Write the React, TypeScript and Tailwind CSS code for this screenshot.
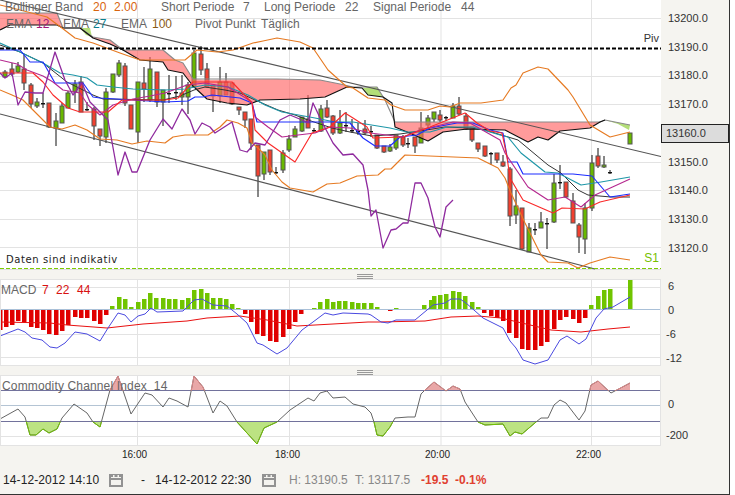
type Pt = [number, number];
type Candle = [number, number, number, number, number, "g" | "r" | "d"];

// x, high, low, body top, body bottom, colour (d = doji)
const candles: Candle[] = [
  [5, 70, 78, 72, 77, "g"], [12, 63, 76, 69, 74, "r"], [18, 62, 73, 66, 72, "g"], [24, 55, 90, 69, 83, "r"],
  [31, 83, 108, 85, 104, "r"], [37, 98, 108, 102, 106, "g"], [43, 93, 108, 103, 103, "d"], [49, 103, 128, 103, 127, "r"],
  [56, 113, 146, 121, 128, "g"], [62, 103, 123, 106, 123, "g"], [68, 91, 108, 93, 108, "g"], [75, 80, 103, 84, 92, "g"],
  [81, 76, 112, 82, 112, "r"], [87, 102, 111, 109, 109, "d"], [94, 107, 140, 109, 126, "r"], [100, 129, 146, 129, 136, "r"],
  [106, 88, 143, 92, 137, "g"], [113, 74, 93, 74, 92, "g"], [119, 60, 77, 63, 75, "g"], [125, 63, 106, 66, 103, "r"],
  [131, 105, 129, 105, 129, "r"], [138, 82, 143, 82, 132, "g"], [144, 67, 102, 83, 89, "r"], [150, 57, 102, 69, 100, "g"],
  [157, 72, 107, 72, 102, "r"], [163, 90, 126, 90, 102, "g"], [169, 75, 103, 93, 93, "d"], [176, 76, 100, 92, 92, "d"],
  [182, 75, 105, 93, 97, "g"], [188, 82, 114, 85, 97, "g"], [194, 50, 87, 53, 87, "g"], [201, 46, 75, 54, 70, "r"],
  [207, 63, 88, 69, 87, "r"], [213, 85, 112, 85, 96, "r"], [220, 67, 103, 82, 96, "g"], [226, 73, 95, 82, 95, "r"],
  [232, 83, 105, 83, 104, "r"], [239, 107, 115, 107, 110, "r"], [245, 112, 128, 112, 120, "r"], [251, 119, 150, 119, 143, "r"],
  [258, 145, 197, 145, 176, "r"], [264, 152, 180, 152, 174, "g"], [270, 150, 175, 150, 172, "r"], [276, 167, 174, 172, 172, "d"],
  [283, 150, 173, 153, 170, "g"], [289, 135, 152, 139, 150, "g"], [295, 126, 137, 129, 137, "g"], [302, 117, 132, 117, 131, "g"],
  [308, 95, 128, 119, 128, "r"], [314, 128, 132, 130, 130, "d"], [321, 105, 132, 109, 131, "g"], [327, 100, 118, 108, 117, "r"],
  [333, 115, 135, 116, 133, "r"], [340, 110, 134, 123, 133, "g"], [346, 112, 132, 125, 125, "d"], [352, 119, 133, 130, 130, "d"],
  [358, 123, 135, 131, 131, "d"], [365, 120, 135, 129, 133, "r"], [371, 126, 137, 131, 131, "d"], [377, 135, 149, 135, 148, "r"],
  [384, 146, 153, 146, 152, "r"], [390, 144, 152, 147, 151, "g"], [396, 135, 150, 135, 148, "g"], [403, 135, 147, 137, 145, "r"],
  [408, 138, 148, 143, 143, "d"], [415, 137, 153, 137, 146, "r"], [421, 112, 143, 128, 143, "g"], [428, 115, 130, 118, 125, "g"],
  [434, 112, 122, 112, 119, "g"], [440, 110, 122, 115, 120, "r"], [446, 116, 121, 117, 117, "d"], [453, 103, 118, 106, 118, "g"],
  [459, 97, 115, 106, 114, "r"], [466, 113, 130, 116, 129, "r"], [472, 127, 142, 127, 140, "r"], [478, 143, 152, 143, 149, "r"],
  [485, 146, 157, 146, 156, "r"], [491, 152, 165, 153, 153, "d"], [497, 153, 163, 153, 160, "r"], [503, 155, 167, 162, 166, "r"],
  [510, 167, 226, 169, 216, "r"], [516, 190, 224, 206, 215, "g"], [522, 208, 250, 208, 249, "r"], [529, 223, 252, 228, 252, "g"],
  [535, 223, 235, 229, 229, "d"], [541, 212, 228, 222, 228, "g"], [547, 218, 249, 223, 223, "d"], [554, 174, 223, 183, 222, "g"],
  [560, 165, 189, 182, 182, "d"], [566, 182, 198, 182, 197, "r"], [573, 193, 223, 201, 223, "r"], [579, 223, 253, 225, 237, "r"],
  [585, 203, 254, 208, 239, "g"], [592, 155, 211, 163, 208, "g"], [598, 148, 168, 156, 166, "r"], [604, 156, 168, 165, 167, "g"],
  [610, 170, 174, 172, 172, "d"], [630, 133, 144, 133, 144, "g"],
];

const upperBand: Pt[] = [[0, 5], [20, 10], [47, 17], [62, 28], [75, 38], [93, 43], [120, 53], [140, 60], [163, 60], [185, 60], [197, 50], [217, 52], [233, 50], [253, 43], [263, 41], [277, 38], [300, 42], [313, 48], [328, 70], [347, 87], [353, 88], [368, 98], [385, 100], [391, 105], [405, 110], [428, 110], [440, 106], [450, 107], [460, 103], [481, 103], [503, 100], [511, 88], [516, 85], [523, 73], [538, 67], [548, 69], [568, 90], [573, 97], [590, 125], [610, 137], [630, 132]];
const lowerBand: Pt[] = [[0, 90], [12, 95], [23, 100], [33, 110], [43, 120], [50, 127], [62, 129], [75, 125], [87, 130], [100, 139], [117, 140], [132, 144], [147, 141], [165, 143], [173, 137], [185, 135], [208, 135], [220, 127], [227, 120], [238, 123], [247, 128], [252, 143], [258, 148], [265, 155], [272, 170], [282, 182], [290, 188], [313, 192], [327, 184], [340, 183], [357, 176], [378, 175], [385, 169], [391, 169], [405, 155], [478, 158], [498, 168], [505, 178], [511, 193], [525, 223], [541, 255], [548, 262], [568, 263], [578, 268], [590, 263], [610, 257], [630, 260]];
const blackLine: Pt[] = [[0, 45], [20, 52], [43, 63], [67, 82], [93, 95], [103, 99], [163, 100], [180, 96], [194, 90], [205, 87], [225, 90], [240, 93], [255, 100], [278, 110], [295, 115], [308, 120], [332, 128], [350, 132], [372, 136], [400, 134], [420, 131], [445, 127], [470, 128], [485, 130], [518, 140], [548, 165], [561, 173], [578, 190], [588, 195], [611, 197], [630, 197]];
const tealLine: Pt[] = [[0, 43], [20, 52], [43, 63], [60, 73], [73, 75], [87, 78], [97, 85], [113, 87], [133, 89], [165, 90], [185, 89], [205, 85], [228, 87], [248, 95], [265, 105], [282, 112], [315, 118], [335, 122], [353, 122], [390, 128], [407, 132], [430, 132], [447, 127], [473, 127], [500, 135], [508, 137], [521, 153], [545, 172], [558, 173], [581, 185], [601, 182], [630, 177]];
const magentaLine: Pt[] = [[0, 60], [17, 64], [27, 70], [43, 76], [53, 82], [63, 90], [80, 93], [88, 105], [100, 115], [113, 105], [133, 99], [150, 96], [165, 93], [187, 85], [205, 83], [228, 87], [252, 102], [255, 117], [268, 127], [282, 137], [298, 135], [315, 133], [330, 127], [350, 128], [370, 133], [403, 137], [420, 130], [453, 122], [470, 123], [500, 140], [505, 153], [528, 187], [548, 200], [565, 197], [581, 207], [595, 195], [630, 179]];
const redLine: Pt[] = [[0, 73], [33, 73], [43, 82], [53, 95], [68, 108], [80, 112], [108, 112], [122, 100], [165, 100], [178, 98], [190, 85], [193, 82], [232, 82], [252, 103], [255, 130], [268, 143], [295, 162], [312, 133], [330, 127], [345, 113], [353, 118], [367, 127], [373, 138], [403, 137], [430, 127], [465, 113], [477, 123], [490, 131], [502, 133], [507, 157], [510, 178], [523, 200], [553, 213], [562, 208], [585, 209], [600, 202], [630, 195]];
const blueLine: Pt[] = [[0, 50], [20, 50], [30, 62], [43, 62], [55, 83], [83, 83], [93, 97], [100, 98], [165, 102], [188, 101], [195, 97], [203, 97], [212, 95], [240, 98], [252, 103], [257, 122], [335, 122], [350, 123], [363, 138], [375, 146], [390, 146], [400, 137], [417, 135], [430, 128], [457, 123], [473, 123], [490, 130], [503, 133], [508, 162], [517, 162], [523, 174], [573, 174], [592, 176], [610, 197], [630, 194]];
const purpleLine: Pt[] = [[0, 73], [5, 78], [12, 73], [18, 105], [25, 92], [35, 93], [43, 93], [55, 52], [65, 80], [73, 95], [82, 83], [90, 102], [108, 120], [118, 175], [125, 152], [132, 172], [137, 172], [150, 140], [163, 119], [172, 129], [182, 109], [190, 120], [195, 134], [202, 123], [210, 127], [215, 133], [232, 122], [240, 150], [247, 152], [255, 143], [265, 145], [280, 120], [290, 115], [302, 120], [308, 123], [313, 103], [322, 122], [333, 143], [343, 155], [353, 154], [363, 165], [368, 190], [371, 216], [376, 210], [383, 248], [391, 230], [396, 229], [403, 223], [408, 223], [415, 183], [421, 183], [428, 198], [435, 227], [440, 237], [446, 207], [453, 200]];

const cloudRed: Pt[][] = [
  [[0, 13], [57, 13], [63, 28], [57, 25], [10, 25], [0, 30]],
  [[93, 37], [110, 40], [123, 50], [163, 50], [175, 60], [183, 63], [193, 79], [207, 80], [277, 79], [320, 80], [340, 84], [353, 87], [347, 87], [325, 97], [300, 99], [260, 100], [247, 105], [227, 103], [207, 99], [193, 86], [183, 73], [168, 70], [163, 62], [140, 60], [123, 50], [110, 44], [93, 38]],
  [[395, 122], [600, 122], [590, 128], [560, 131], [548, 140], [538, 137], [528, 142], [505, 130], [467, 129], [443, 132], [428, 141], [407, 132], [395, 127]],
];
const cloudGreen: Pt[][] = [
  [[80, 28], [90, 28], [92, 37], [86, 35]],
  [[362, 88], [377, 87], [383, 97], [368, 95]],
  [[605, 120], [630, 125], [629, 130], [618, 124]],
];
const cloudTop: Pt[] = [[0, 13], [57, 13], [63, 28], [80, 28], [93, 37], [110, 40], [123, 50], [163, 50], [175, 60], [183, 63], [193, 79], [277, 79], [320, 80], [340, 84], [353, 87], [377, 87], [385, 100], [395, 122], [600, 122], [605, 120], [630, 125]];
const cloudBottom: Pt[] = [[0, 30], [10, 25], [57, 25], [63, 28], [80, 28], [93, 38], [110, 44], [123, 50], [140, 60], [163, 62], [168, 70], [183, 73], [193, 86], [207, 99], [227, 103], [247, 105], [260, 100], [300, 99], [325, 97], [347, 87], [362, 88], [368, 95], [383, 97], [392, 103], [395, 127], [407, 132], [428, 141], [443, 132], [467, 129], [505, 130], [528, 142], [538, 137], [548, 140], [560, 131], [590, 128], [600, 122], [605, 120]];

// x, bar end (zero line is 309)
const macdBars: Pt[] = [[0, 330], [6, 327], [12, 325], [18, 321], [24, 322], [31, 327], [37, 328], [43, 330], [49, 334], [56, 335], [62, 331], [68, 325], [75, 317], [81, 318], [87, 318], [94, 321], [100, 324], [106, 315], [112, 306], [119, 297], [125, 299], [131, 307], [138, 302], [144, 299], [150, 293], [156, 298], [163, 298], [169, 299], [175, 299], [182, 300], [188, 298], [194, 290], [201, 289], [207, 293], [213, 298], [220, 298], [226, 299], [232, 304], [238, 308], [245, 314], [251, 322], [257, 334], [263, 336], [270, 341], [276, 342], [283, 337], [289, 329], [295, 322], [301, 314], [314, 308], [320, 302], [327, 299], [333, 302], [339, 301], [345, 301], [352, 302], [358, 303], [364, 303], [371, 303], [377, 307], [390, 311], [396, 308], [424, 305], [431, 300], [434, 296], [440, 295], [446, 294], [453, 291], [459, 292], [465, 296], [472, 302], [478, 307], [484, 313], [491, 316], [497, 318], [503, 321], [509, 333], [516, 338], [522, 349], [528, 350], [535, 350], [541, 346], [547, 342], [554, 329], [560, 320], [566, 317], [573, 319], [579, 323], [585, 318], [591, 305], [598, 296], [604, 290], [610, 289], [630, 279]];
const macdBlue: Pt[] = [[0, 336], [18, 329], [25, 332], [32, 338], [42, 340], [50, 347], [57, 348], [65, 343], [75, 332], [87, 334], [100, 341], [108, 328], [118, 313], [125, 315], [131, 322], [138, 316], [145, 314], [151, 308], [157, 312], [183, 311], [194, 300], [202, 299], [213, 305], [227, 306], [237, 314], [247, 323], [257, 343], [263, 345], [277, 354], [287, 348], [302, 330], [313, 322], [325, 313], [333, 315], [343, 313], [368, 314], [371, 315], [381, 322], [388, 323], [396, 320], [415, 320], [433, 305], [445, 303], [451, 299], [460, 299], [466, 303], [483, 318], [503, 328], [510, 341], [516, 348], [523, 360], [535, 364], [548, 360], [560, 340], [567, 336], [579, 344], [586, 339], [596, 318], [604, 309], [613, 307], [630, 297]];
const macdRed: Pt[] = [[0, 322], [50, 323], [67, 325], [107, 328], [143, 324], [187, 321], [207, 318], [240, 316], [267, 320], [297, 326], [333, 324], [368, 322], [378, 322], [425, 321], [451, 317], [478, 316], [501, 318], [551, 330], [581, 332], [608, 329], [630, 327]];

const cci: Pt[] = [[0, 419], [18, 409], [25, 417], [30, 435], [36, 435], [43, 429], [49, 433], [57, 429], [62, 418], [74, 404], [87, 413], [93, 422], [100, 427], [110, 390], [118, 376], [131, 414], [145, 393], [152, 395], [163, 407], [169, 398], [177, 401], [188, 407], [194, 376], [203, 387], [213, 413], [220, 401], [227, 406], [237, 422], [257, 444], [264, 428], [277, 422], [290, 410], [308, 398], [314, 401], [320, 393], [327, 391], [333, 398], [345, 397], [353, 404], [365, 407], [371, 413], [374, 422], [377, 435], [383, 436], [390, 427], [395, 418], [408, 417], [415, 417], [421, 394], [425, 390], [434, 382], [446, 391], [453, 386], [460, 389], [465, 402], [478, 422], [485, 425], [503, 424], [510, 436], [515, 432], [522, 434], [536, 422], [541, 418], [548, 418], [554, 405], [560, 400], [566, 403], [579, 420], [585, 411], [591, 385], [598, 381], [611, 393], [630, 383]];

const toPoints = (pts: Pt[]) => pts.map(([x, y]) => `${x},${y}`).join(" ");
const gridX = [137.5, 289.5, 441, 591.5];

function Line({ pts, color, width = 1.15 }: { pts: Pt[]; color: string; width?: number }) {
  return <polyline points={toPoints(pts)} fill="none" stroke={color} strokeWidth={width} strokeLinejoin="round" />;
}

function GridLines({ ys, top, bottom }: { ys: number[]; top: number; bottom: number }) {
  return (
    <g stroke="#e3e3e3" strokeWidth="1">
      {ys.map((y) => (
        <line key={y} x1="0" x2="661" y1={y} y2={y} />
      ))}
      {gridX.map((x) => (
        <line key={x} x1={x} x2={x} y1={top} y2={bottom} />
      ))}
    </g>
  );
}

function CandleBar({ c }: { c: Candle }) {
  const [x, high, low, top, bottom, kind] = c;
  return (
    <g>
      <line x1={x} x2={x} y1={high} y2={low} stroke="#111" strokeWidth="1" />
      {kind === "d" ? (
        <rect x={x - 2} y={top} width="4" height="1.4" fill="#111" />
      ) : (
        <rect x={x - 2} y={top} width="4" height={bottom - top} fill={kind === "g" ? "#69b800" : "#f2402f"} stroke="#555" strokeWidth="1" />
      )}
    </g>
  );
}

function MainChart() {
  return (
    <svg viewBox="0 0 661 270" width="661" height="270" className="block">
      <GridLines ys={[18.5, 76.5, 104.5, 162.5, 190.5, 219.5, 247.5]} top={0} bottom={270} />
      {candles.map((c) => (
        <CandleBar key={c[0]} c={c} />
      ))}
      {cloudRed.map((p, i) => (
        <polygon key={i} points={toPoints(p)} fill="#ff6666" fillOpacity="0.65" />
      ))}
      {cloudGreen.map((p, i) => (
        <polygon key={i} points={toPoints(p)} fill="#a6d860" fillOpacity="0.85" />
      ))}
      <Line pts={cloudTop} color="#8a8a8a" />
      <Line pts={cloudBottom} color="#111" />
      <line x1="0" y1="0" x2="661" y2="156.5" stroke="#555" strokeWidth="1.15" />
      <line x1="0" y1="114" x2="595" y2="269" stroke="#555" strokeWidth="1.15" />
      <Line pts={upperBand} color="#e67a22" />
      <Line pts={lowerBand} color="#e67a22" />
      <Line pts={blackLine} color="#333" width={1} />
      <Line pts={tealLine} color="#1f97a8" />
      <Line pts={blueLine} color="#1c2cff" />
      <Line pts={magentaLine} color="#b5288f" />
      <Line pts={redLine} color="#fa2a2a" />
      <Line pts={purpleLine} color="#8f2a9e" width={1.3} />
      <line x1="0" x2="661" y1="48.5" y2="48.5" stroke="#000" strokeWidth="2" strokeDasharray="4 2" />
      <line x1="0" x2="661" y1="268.5" y2="268.5" stroke="#7ccc00" strokeWidth="1" strokeDasharray="4 2" />
    </svg>
  );
}

function MacdChart() {
  return (
    <svg viewBox="0 279 661 87" width="661" height="87" className="block">
      <GridLines ys={[287.5, 334.5, 357.5]} top={279} bottom={365} />
      <line x1="0" x2="661" y1="309.5" y2="309.5" stroke="#a9c0d8" strokeWidth="1" />
      {macdBars.map(([x, y]) =>
        y < 309 ? (
          <rect key={x} x={x - 2} y={y} width="4.5" height={309 - y} fill="#70c400" />
        ) : (
          <rect key={x} x={x - 2} y={310} width="4.5" height={y - 310} fill="#e00000" />
        ),
      )}
      <Line pts={macdRed} color="#e81010" width={1} />
      <Line pts={macdBlue} color="#4a4ae0" width={1} />
    </svg>
  );
}

function CciChart() {
  const fillPts = (base: number): Pt[] => [[0, base], ...cci, [630, base]];
  return (
    <svg viewBox="0 375 661 71" width="661" height="71" className="block">
      <defs>
        <clipPath id="cciOver">
          <rect x="0" y="375" width="661" height="15.7" />
        </clipPath>
        <clipPath id="cciUnder">
          <rect x="0" y="421.7" width="661" height="24" />
        </clipPath>
      </defs>
      <GridLines ys={[436.5]} top={375} bottom={445} />
      <line x1="0" x2="661" y1="405.5" y2="405.5" stroke="#b4c4d4" strokeWidth="1" />
      <polygon points={toPoints(fillPts(390.7))} fill="#e9a7a7" clipPath="url(#cciOver)" />
      <polygon points={toPoints(fillPts(421.7))} fill="#bce382" clipPath="url(#cciUnder)" />
      <line x1="0" x2="661" y1="390.5" y2="390.5" stroke="#72729c" strokeWidth="1" />
      <line x1="0" x2="661" y1="421.5" y2="421.5" stroke="#72729c" strokeWidth="1" />
      <Line pts={cci} color="#666" width={1} />
      <g clipPath="url(#cciUnder)">
        <Line pts={cci} color="#72c400" width={1} />
      </g>
      <g clipPath="url(#cciOver)">
        <Line pts={cci} color="#dd8888" width={1} />
      </g>
    </svg>
  );
}

function Handle() {
  return (
    <div className="flex h-[9px] w-[661px] shrink-0 items-end justify-center pl-[69px]">
      <div className="flex h-[5px] w-[16px] flex-col justify-between">
        <div className="h-px bg-[#999]" />
        <div className="h-px bg-[#999]" />
        <div className="h-px bg-[#999]" />
      </div>
    </div>
  );
}

function CalendarIcon() {
  return (
    <svg width="14" height="13" viewBox="0 0 14 13" className="shrink-0">
      <rect x="0" y="0" width="14" height="13" fill="#929292" />
      <rect x="2" y="3" width="10" height="8" fill="#f4f3ef" />
      <rect x="2" y="4" width="10" height="2" fill="#929292" />
      <rect x="4" y="1" width="1.5" height="3" fill="#f4f3ef" />
      <rect x="8.5" y="1" width="1.5" height="3" fill="#f4f3ef" />
    </svg>
  );
}

export default function App() {
  return (
    <div className="h-[495px] w-[735px] overflow-hidden bg-white font-['Liberation_Sans',sans-serif]">
      <div className="flex h-[495px] w-[730px] flex-col border-r border-b border-[#333] bg-[#f5f4f0]">
        {/* Hauptchart */}
        <div className="flex h-[270px] shrink-0">
          <div className="relative h-[270px] w-[661px] shrink-0 border-b border-[#ddd] bg-white">
            <MainChart />
            <div className="absolute top-0 left-[5px] flex text-[12px] leading-[15px] text-[#666]">
              <span className="w-[88px]">Bollinger Band</span>
              <span className="w-[21px] text-[#d8640f]">20</span>
              <span className="w-[47px] text-[#d8640f]">2.00</span>
              <span className="w-[82px]">Short Periode</span>
              <span className="w-[21px]">7</span>
              <span className="w-[81px]">Long Periode</span>
              <span className="w-[28px]">22</span>
              <span className="w-[88px]">Signal Periode</span>
              <span>44</span>
            </div>
            <div className="absolute top-[17px] left-[6px] flex text-[12px] leading-[15px] text-[#666]">
              <span className="w-[30px]">EMA</span>
              <span className="w-[27px] text-[#a01878]">12</span>
              <span className="w-[30px]">EMA</span>
              <span className="w-[28px] text-[#0a8090]">27</span>
              <span className="w-[31px]">EMA</span>
              <span className="w-[43px] text-[#8a5a14]">100</span>
              <span className="w-[66px]">Pivot Punkt</span>
              <span>Täglich</span>
            </div>
            <span className="absolute top-[31px] right-[2px] text-[11px] leading-[14px] text-[#333]">Piv</span>
            <span className="absolute top-[251px] right-[2px] text-[12px] leading-[15px] text-[#77c000]">S1</span>
            <span className="absolute top-[254px] left-[6px] font-['DejaVu_Sans',sans-serif] text-[10px] leading-[12px] tracking-[0.6px] text-[#222]">
              Daten sind indikativ
            </span>
          </div>
          <div className="relative w-[68px] shrink-0 pt-[4px] pl-[7px] text-[11px] text-[#333]">
            {["13200.0", "13190.0", "13180.0", "13170.0", "", "13150.0", "13140.0", "13130.0", "13120.0"].map((v, i) => (
              <div key={i} className="flex h-[28.7px] items-center">
                {v}
              </div>
            ))}
            <div className="absolute top-[124px] left-0 flex h-[19px] w-[68px] items-center border border-[#222] bg-[#dcdcdc] pl-[4px]">
              13160.0
            </div>
          </div>
        </div>

        <Handle />

        {/* MACD */}
        <div className="flex h-[87px] shrink-0">
          <div className="relative h-[87px] w-[661px] shrink-0 bg-white outline -outline-offset-1 outline-[#e3e3e3]">
            <MacdChart />
            <div className="absolute top-[4px] left-[1px] flex text-[12px] leading-[15px] text-[#666]">
              <span className="w-[41px]">MACD</span>
              <span className="w-[14px] text-[#d81010]">7</span>
              <span className="w-[21px] text-[#d81010]">22</span>
              <span className="text-[#d81010]">44</span>
            </div>
          </div>
          <div className="w-[68px] shrink-0 pl-[5px] text-[11px] text-[#333]">
            <div className="mt-[-5px] flex h-[24px] items-center pl-[2px]">6</div>
            <div className="flex h-[24px] items-center pl-[2px]">0</div>
            <div className="flex h-[24px] items-center">-6</div>
            <div className="flex h-[24px] items-center">-12</div>
          </div>
        </div>

        <Handle />

        {/* CCI */}
        <div className="flex h-[71px] shrink-0">
          <div className="relative h-[71px] w-[661px] shrink-0 bg-white outline -outline-offset-1 outline-[#e3e3e3]">
            <CciChart />
            <span className="absolute top-[4px] left-[2px] text-[12px] leading-[15px] tracking-[0.15px] whitespace-pre text-[#666]">
              Commodity Channel Index  14
            </span>
          </div>
          <div className="w-[68px] shrink-0 pl-[5px] text-[11px] text-[#333]">
            <div className="flex h-[31px] items-center pt-[28px] pl-[2px]">0</div>
            <div className="flex h-[31px] items-center pt-[28px]">-200</div>
          </div>
        </div>

        {/* Zeitachse */}
        <div className="h-[14px] w-[661px] shrink-0 text-[10px] leading-[14px] text-[#222]">
          <div className="flex pt-[2px]">
            <span className="ml-[122px] w-[153px]">16:00</span>
            <span className="w-[150px]">18:00</span>
            <span className="w-[151px]">20:00</span>
            <span>22:00</span>
          </div>
        </div>

        {/* Fusszeile */}
        <div className="flex flex-1 items-center pt-[6px] pl-[3px] text-[12px] text-[#222]">
          <span className="w-[106px] tracking-[0.1px]">14-12-2012 14:10</span>
          <CalendarIcon />
          <span className="ml-[18px] w-[14px]">-</span>
          <span className="w-[107px] tracking-[0.1px]">14-12-2012 22:30</span>
          <CalendarIcon />
          <span className="ml-[13px] w-[66px] text-[#888]">H: 13190.5</span>
          <span className="w-[66px] text-[#888]">T: 13117.5</span>
          <span className="w-[34px] font-bold text-[#e04030]">-19.5</span>
          <span className="font-bold text-[#e04030]">-0.1%</span>
        </div>
      </div>
    </div>
  );
}
